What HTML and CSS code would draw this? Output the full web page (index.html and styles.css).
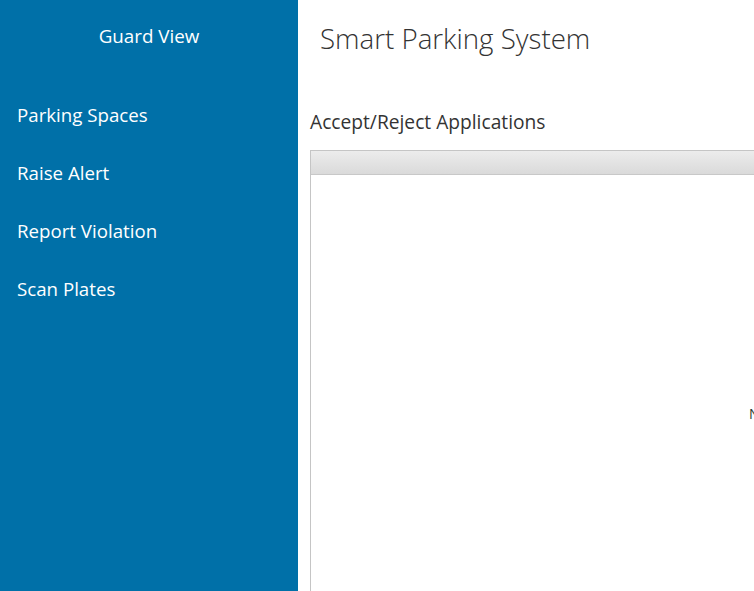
FILE: index.html
```html
<!DOCTYPE html>
<html>
<head>
<meta charset="utf-8">
<link rel="stylesheet" href="styles.css">
</head>
<body>
<div class="app">
  <aside class="sidebar">
    <div class="brand">Guard View</div>
    <nav class="nav">
      <a class="nav-item">Parking Spaces</a>
      <a class="nav-item">Raise Alert</a>
      <a class="nav-item">Report Violation</a>
      <a class="nav-item">Scan Plates</a>
    </nav>
  </aside>
  <main class="main">
    <h1 class="title">Smart Parking System</h1>
    <h2 class="section">Accept/Reject Applications</h2>
    <div class="grid">
      <div class="grid-header"></div>
      <div class="grid-body">
        <span class="empty">No records to display</span>
      </div>
    </div>
  </main>
</div>
</body>
</html>
```
FILE: styles.css
```css
html, body {
  margin: 0;
  padding: 0;
  width: 754px;
  height: 591px;
  overflow: hidden;
  background: #fff;
  font-family: "Open Sans", "Noto Sans", sans-serif;
}
.app {
  display: flex;
  height: 591px;
  overflow: hidden;
}
.sidebar {
  width: 298px;
  flex: none;
  background: #0070a8;
  color: #fff;
}
.brand {
  text-align: center;
  font-size: 18.8px;
  padding-top: 24px;
  height: 50px;
  line-height: 24px;
}
.nav {
  display: flex;
  flex-direction: column;
  padding-left: 17px;
  padding-top: 29px;
}
.nav-item {
  font-size: 18.7px;
  line-height: 24px;
  height: 58px;
  color: #fff;
}
.main {
  flex: 1;
  min-width: 0;
  padding-left: 12px;
  overflow: hidden;
}
.title {
  margin: 0;
  font-weight: 300;
  font-size: 27.7px;
  line-height: 36px;
  padding-top: 20px;
  padding-left: 10px;
  color: #333;
}
.section {
  margin: 0;
  font-weight: 400;
  font-size: 19.2px;
  line-height: 26px;
  padding-top: 53px;
  color: #333;
}
.grid {
  margin-top: 15px;
  border: 1px solid #c5c5c5;
  border-right: none;
  border-bottom: none;
  height: 441px;
  overflow: hidden;
}
.grid-header {
  height: 23px;
  border-bottom: 1px solid #c8c8c8;
  background: linear-gradient(#ececec, #dadada);
}
.grid-body {
  position: relative;
  height: 416px;
}
.empty {
  position: absolute;
  left: 438px;
  top: 229px;
  font-size: 14px;
  color: #2e3b2e;
  white-space: nowrap;
}
```
